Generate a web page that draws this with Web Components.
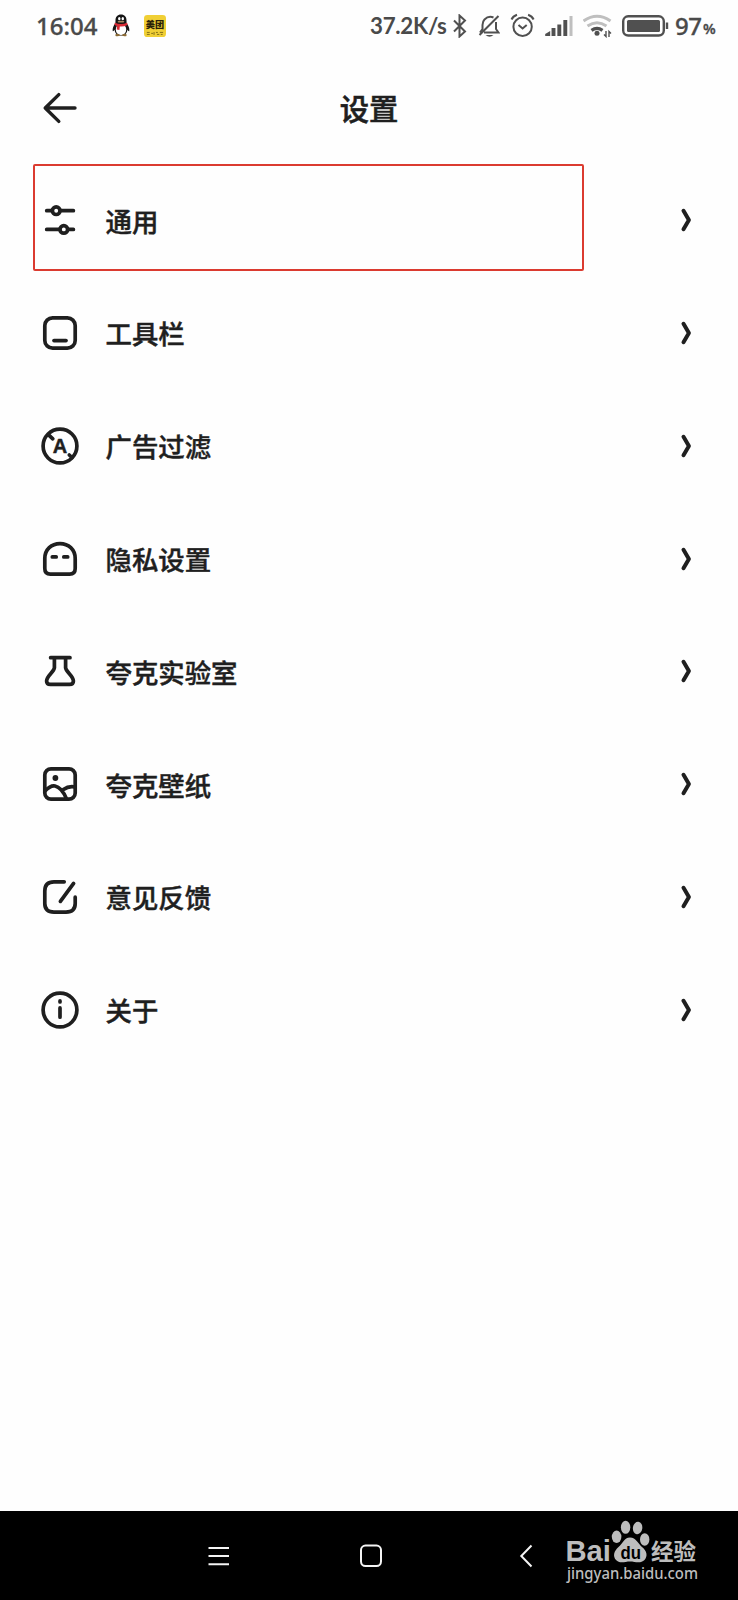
<!DOCTYPE html>
<html lang="zh-CN">
<head>
<meta charset="utf-8">
<title>设置</title>
<style>
  body {
    margin: 0;
    background: #fefefe;
    color: #1f1f1f;
    font-family: "Noto Sans CJK SC", sans-serif;
  }
</style>
</head>
<body>
<settings-page>
  <status-bar slot="status">
    <span slot="time">16:04</span>
    <span slot="speed">37.2K/s</span>
    <span slot="battery">97</span>
  </status-bar>
  <page-header slot="header">设置</page-header>
  <setting-row icon="sliders" marked>通用</setting-row>
  <setting-row icon="toolbar">工具栏</setting-row>
  <setting-row icon="adblock">广告过滤</setting-row>
  <setting-row icon="ghost">隐私设置</setting-row>
  <setting-row icon="flask">夸克实验室</setting-row>
  <setting-row icon="wallpaper">夸克壁纸</setting-row>
  <setting-row icon="feedback">意见反馈</setting-row>
  <setting-row icon="about">关于</setting-row>
  <nav-bar slot="nav"><jingyan-logo></jingyan-logo></nav-bar>
</settings-page>

<script>
const ICONS = {
  sliders: `
    <path d="M6.7 10.7H11.5M21 10.7H33.4M6.7 29.4H19M28.5 29.4H33.4"/>
    <circle cx="16.2" cy="10.7" r="3.8"/>
    <circle cx="23.8" cy="29.4" r="3.8"/>`,
  toolbar: `
    <rect x="4.8" y="4.8" width="30.4" height="30.4" rx="7.8"/>
    <path d="M14 27.6H26"/>`,
  adblock: `
    <circle cx="20" cy="20" r="16.9"/>
    <path d="M8.6 8.8L12.8 12.8M29.3 29L32 31.5"/>
    <text x="20" y="27.2" text-anchor="middle">A</text>`,
  ghost: `
    <path d="M4.8 19.5C4.8 10.5 11.5 4.6 20 4.6S35.2 10.5 35.2 19.5V29.6Q35.2 35.2 29.6 35.2H10.4Q4.8 35.2 4.8 29.6Z"/>
    <path d="M12.3 17.9H16.2M23.8 17.9H27.7"/>`,
  flask: `
    <path d="M10.6 6.7H30M14.4 6.7V16.8C14 20.800 6.600 25 6.600 30Q6.600 33.400 10.400 33.400H29.600Q33.400 33.400 33.400 30C33.400 25 26 20.800 25.600 16.800V6.700"/>`,
  wallpaper: `
    <rect x="4.8" y="4.8" width="30.4" height="30.4" rx="6.2"/>
    <path d="M5 27C8.6 23.2 12 21.4 15 22C20 23 23.6 28 26.4 34.6M23.4 25.6C26.4 23.4 30 22 35 23"/>
    <circle cx="15.4" cy="14" r="2.9" class="dot"/>`,
  feedback: `
    <path d="M24.2 4.8H14Q4.8 4.8 4.8 14V26.6Q4.8 35.2 14 35.2H26Q35.2 35.2 35.2 26.6V20.2M33.6 6.4L20.4 24.4"/>`,
  about: `
    <circle cx="20" cy="20" r="16.9"/>
    <path d="M20 10.9V11.9M20 17.9V27.2"/>`
};

class SettingsPage extends HTMLElement {
  constructor() {
    super();
    this.attachShadow({ mode: 'open' });
  }

  connectedCallback() {
    this.shadowRoot.innerHTML = `
      <style>
        :host {
          display: flex;
          flex-direction: column;
          height: 1600px;
          width: 738px;
        }
        main {
          flex: 1;
          display: flex;
          flex-direction: column;
          padding-top: 12.8px;
        }
      </style>
      <slot name="status"></slot>
      <slot name="header"></slot>
      <main><slot></slot></main>
      <slot name="nav"></slot>
    `;
  }
}

class StatusBar extends HTMLElement {
  constructor() {
    super();
    this.attachShadow({ mode: 'open' });
  }

  connectedCallback() {
    this.shadowRoot.innerHTML = `
      <style>
        :host {
          display: flex;
          align-items: center;
          height: 51px;
          padding: 0 22px 0 36px;
          box-sizing: border-box;
          color: #4a4a4a;
          font: 500 24px/50px "Noto Sans", sans-serif;
          -webkit-text-stroke: 0.300px #4a4a4a;
        }
        svg { flex: none; fill: none; stroke: #505050; stroke-width: 2; -webkit-text-stroke: 0; }
        svg.app { stroke: none; }
        .time { width: 76px; }
        .apps { flex: 1; display: flex; gap: 14px; align-items: center; }
        .speed {
          width: 81px;
          font: 700 22.300px/50px Lato, sans-serif;
          letter-spacing: -0.300px;
          -webkit-text-stroke: 0;
        }
        .icons { display: flex; gap: 10px; align-items: center; }
        .battery { width: 28px; margin-left: 5px; letter-spacing: -0.600px; }
        .percent { width: 13px; font-size: 14.500px; padding-top: 4px; font-weight: 600; }
        .faint { stroke: #bfbfbf; stroke-width: 3; }
        .solid { fill: #505050; stroke: none; }
      </style>
      <div class="time"><slot name="time"></slot></div>
      <div class="apps">
        <svg class="app" width="18" height="23" viewBox="0 0 18 23">
          <path fill="#151515" d="M9 .5C5.500 .5 3.400 3 3.500 6.500L3.400 9C1.500 11.500 .3 14.500 .7 17C1 17.600 2 16.800 2.600 15.800C3 20 6 21.500 9 21.500S15 20 15.400 15.800C16 16.800 17 17.600 17.300 17C17.700 14.500 16.500 11.500 14.600 9L14.500 6.500C14.600 3 12.500 .5 9 .5Z"/>
          <ellipse cx="9" cy="15.500" rx="5.200" ry="5.600" fill="#fff"/>
          <path d="M2.800 8.700Q9 11.500 15.200 8.700L15.500 11Q11.500 13 7.800 12.500L7.400 16L4.800 15.500L5 12Q3.500 11.500 2.500 10.800Z" fill="#d82b35"/>
          <ellipse cx="7.300" cy="4.700" rx="1.200" ry="1.600" fill="#fff"/>
          <ellipse cx="10.800" cy="4.700" rx="1.200" ry="1.600" fill="#fff"/>
          <ellipse cx="9" cy="7.700" rx="3.300" ry=".9" fill="#a98a62"/>
          <path d="M3.500 20.300Q5.500 19 8.500 21.200Q6 23 3.500 22ZM14.500 20.300Q12.500 19 9.500 21.200Q12 23 14.500 22Z" fill="#8a6a35"/>
        </svg>
        <svg class="app" width="22" height="22" viewBox="0 0 23 23">
          <rect width="23" height="23" rx="3.500" fill="#f0cf35"/>
          <text x="11.500" y="13.300" text-anchor="middle" fill="#2a2208" font-family="Noto Sans CJK SC" font-weight="900" font-size="9.600">美团</text>
          <path d="M3 18.200H6M3 20.300H6M7.500 19.200H9.500M10.500 17.800V20.800M12.500 18.200H14.500M13.500 20.300H16M16.500 18.200H20M17.500 20.300H19.500" stroke="#806c16" stroke-width="1"/>
        </svg>
      </div>
      <div class="speed"><slot name="speed"></slot></div>
      <div class="icons">
        <svg width="16" height="24" viewBox="451 13 16 24"><path d="M454 19.500L465 30.500L459.500 35.500V14.500L465 19.500L454 30.500"/></svg>
        <svg width="23" height="24" viewBox="477.500 13 23 24">
          <path d="M480 34L499 15M494 16.500Q489 14.500 485 18.500Q483 20.500 483 24V28L480.500 31.500M484.500 31.500H499L496.500 28V21"/>
          <path class="solid" d="M486 34H494Q490 37.500 486 34Z"/>
        </svg>
        <svg width="25" height="25" viewBox="510 13 25 25">
          <circle cx="522.600" cy="26.700" r="9.200"/>
          <path d="M518.500 25L522.600 28.500L526.700 25M511.500 19.500Q513 16.200 517 14.800M533.600 19.500Q532.100 16.200 528.100 14.800"/>
        </svg>
        <svg width="28" height="20" viewBox="544.800 15 28 20">
          <path class="solid" d="M545 35V33L550 30V35Z"/>
          <path d="M553.300 35V27M559.100 35V23.500M565.100 35V19" style="stroke-width:3.900"/>
          <path class="faint" d="M570.800 35V15"/>
        </svg>
        <svg width="29" height="24" viewBox="583 14 29 24">
          <path class="faint" d="M583.500 21Q597 11.500 610.500 21M587.500 26Q597 19.500 606.500 26"/>
          <path d="M591.500 30.300Q597 26.500 602.500 30.300" style="stroke-width:3.300"/>
          <circle class="solid" cx="597" cy="33.300" r="2.500"/>
          <path d="M606 31V36.500L604 34.500M609 37V31.500L611 33.500" style="stroke-width:1.400"/>
        </svg>
        <svg width="48" height="22" viewBox="622 14.500 48 22">
          <rect x="623.200" y="15.800" width="40.600" height="19.200" rx="5" style="stroke-width:2.400"/>
          <rect class="solid" x="627" y="19.400" width="33" height="12" rx="1.500"/>
          <path d="M667 22V28.500" style="stroke-width:2.400"/>
        </svg>
      </div>
      <div class="battery"><slot name="battery"></slot></div>
      <div class="percent">%</div>
    `;
  }
}

class PageHeader extends HTMLElement {
  constructor() {
    super();
    this.attachShadow({ mode: 'open' });
  }

  connectedCallback() {
    this.shadowRoot.innerHTML = `
      <style>
        :host {
          display: grid;
          grid-template-columns: 1fr auto 1fr;
          align-items: center;
          height: 100px;
          padding: 0 42px;
        }
        svg { margin-top: 14px; }
        h1 {
          margin: 12px 0 0;
          font-size: 29.300px;
          line-height: 44px;
          font-weight: 500;
          -webkit-text-stroke: 0.600px #1f1f1f;
        }
      </style>
      <svg width="36" height="32" viewBox="0 0 36 32" fill="none" stroke="#1f1f1f" stroke-width="3.400" stroke-linecap="round" stroke-linejoin="round">
        <path d="M16.800 2.600L3.200 16L16.800 29.400M3.200 16H33"/>
      </svg>
      <h1><slot></slot></h1>
    `;
  }
}

class SettingRow extends HTMLElement {
  constructor() {
    super();
    this.attachShadow({ mode: 'open' });
  }

  connectedCallback() {
    const mark = this.hasAttribute('marked') ? '<div class="mark"></div>' : '';
    this.shadowRoot.innerHTML = `
      <style>
        :host {
          display: flex;
          align-items: center;
          position: relative;
          height: 112.800px;
          padding: 0 46px 0 40px;
          font-size: 26.400px;
          font-weight: 500;
          line-height: 40px;
        }
        svg {
          flex: none;
          fill: none;
          stroke: #1f1f1f;
          stroke-width: 3.700;
          stroke-linecap: round;
          stroke-linejoin: round;
        }
        .dot { fill: #1f1f1f; stroke: none; }
        text {
          fill: #1f1f1f;
          stroke: #1f1f1f;
          stroke-width: 0.500;
          font: bold 20px "Liberation Sans", sans-serif;
        }
        .label {
          flex: 1;
          margin-left: 25.500px;
          padding-top: 1px;
          -webkit-text-stroke: 0.450px #1f1f1f;
        }
        .chevron { stroke-width: 4; }
        /* red frame drawn over the row */
        .mark {
          position: absolute;
          left: 33px;
          top: 0;
          width: 547px;
          height: 103px;
          border: 2px solid #db3b30;
          border-radius: 2px;
        }
      </style>
      <svg width="40" height="40" viewBox="0 0 40 40">${ICONS[this.getAttribute('icon')]}</svg>
      <div class="label"><slot></slot></div>
      <svg class="chevron" width="12" height="26" viewBox="0 0 12 26"><path d="M3.500 3.800L8.900 13L3.500 22.200"/></svg>
      ${mark}
    `;
  }
}

class NavBar extends HTMLElement {
  constructor() {
    super();
    this.attachShadow({ mode: 'open' });
  }

  connectedCallback() {
    this.shadowRoot.innerHTML = `
      <style>
        :host {
          display: flex;
          align-items: center;
          position: relative;
          height: 89px;
          background: #000;
        }
        svg { fill: none; stroke: #f4f4f4; stroke-width: 2; }
        .menu { margin-left: 207px; }
        .home { margin-left: 129px; }
        .back { margin-left: 136px; }
        ::slotted(*) {
          position: absolute;
          left: 560px;
          top: 4px;
        }
      </style>
      <svg class="menu" width="23" height="24" viewBox="0 0 23 24"><path d="M1.500 4H22M1.500 12H22M1.500 20.300H22"/></svg>
      <svg class="home" width="24" height="24" viewBox="0 0 24 24"><rect x="2" y="1.600" width="20" height="20.500" rx="4.500"/></svg>
      <svg class="back" width="16" height="24" viewBox="0 0 16 24"><path d="M12.500 1.500L2.300 12L12.500 22.500"/></svg>
      <slot></slot>
    `;
  }
}

class JingyanLogo extends HTMLElement {
  constructor() {
    super();
    this.attachShadow({ mode: 'open' });
  }

  connectedCallback() {
    this.shadowRoot.innerHTML = `
      <style>
        :host { display: block; }
        svg { display: block; overflow: visible; fill: #bdbdbd; }
        .latin { font: bold 29px "Liberation Sans", sans-serif; }
        .du { font: bold 19px "Liberation Sans", sans-serif; fill: #000; }
        .cjk { font: 700 23px "Noto Sans CJK SC", sans-serif; }
        .site { font: 500 17px "Noto Sans", sans-serif; }
      </style>
      <svg width="150" height="81" viewBox="560 1515 150 81">
        <text class="latin" x="565.500" y="1561" textLength="45.500" lengthAdjust="spacingAndGlyphs">Bai</text>
        <ellipse cx="616.600" cy="1536.800" rx="4.800" ry="6.200"/>
        <ellipse cx="625.600" cy="1527.300" rx="4.700" ry="6.500"/>
        <ellipse cx="637.600" cy="1528" rx="4.700" ry="6.300" transform="rotate(8 637.600 1528)"/>
        <ellipse cx="644.700" cy="1539.500" rx="4.700" ry="6.200"/>
        <path d="M630 1537.500C636 1537.500 638.500 1544 642 1547C647 1551 648 1556 644.500 1560C640.500 1564 635 1561.500 630 1561.500S619.500 1564 616 1560C612.500 1556 614 1551 618.500 1547C622.500 1544 624 1537.500 630 1537.500Z"/>
        <text class="du" x="620.500" y="1559" textLength="20.500" lengthAdjust="spacingAndGlyphs">du</text>
        <text class="cjk" x="651" y="1559.500" textLength="45" lengthAdjust="spacingAndGlyphs">经验</text>
        <text class="site" x="567" y="1579" textLength="131" lengthAdjust="spacingAndGlyphs">jingyan.baidu.com</text>
      </svg>
    `;
  }
}

customElements.define('settings-page', SettingsPage);
customElements.define('status-bar', StatusBar);
customElements.define('page-header', PageHeader);
customElements.define('setting-row', SettingRow);
customElements.define('nav-bar', NavBar);
customElements.define('jingyan-logo', JingyanLogo);
</script>
</body>
</html>
